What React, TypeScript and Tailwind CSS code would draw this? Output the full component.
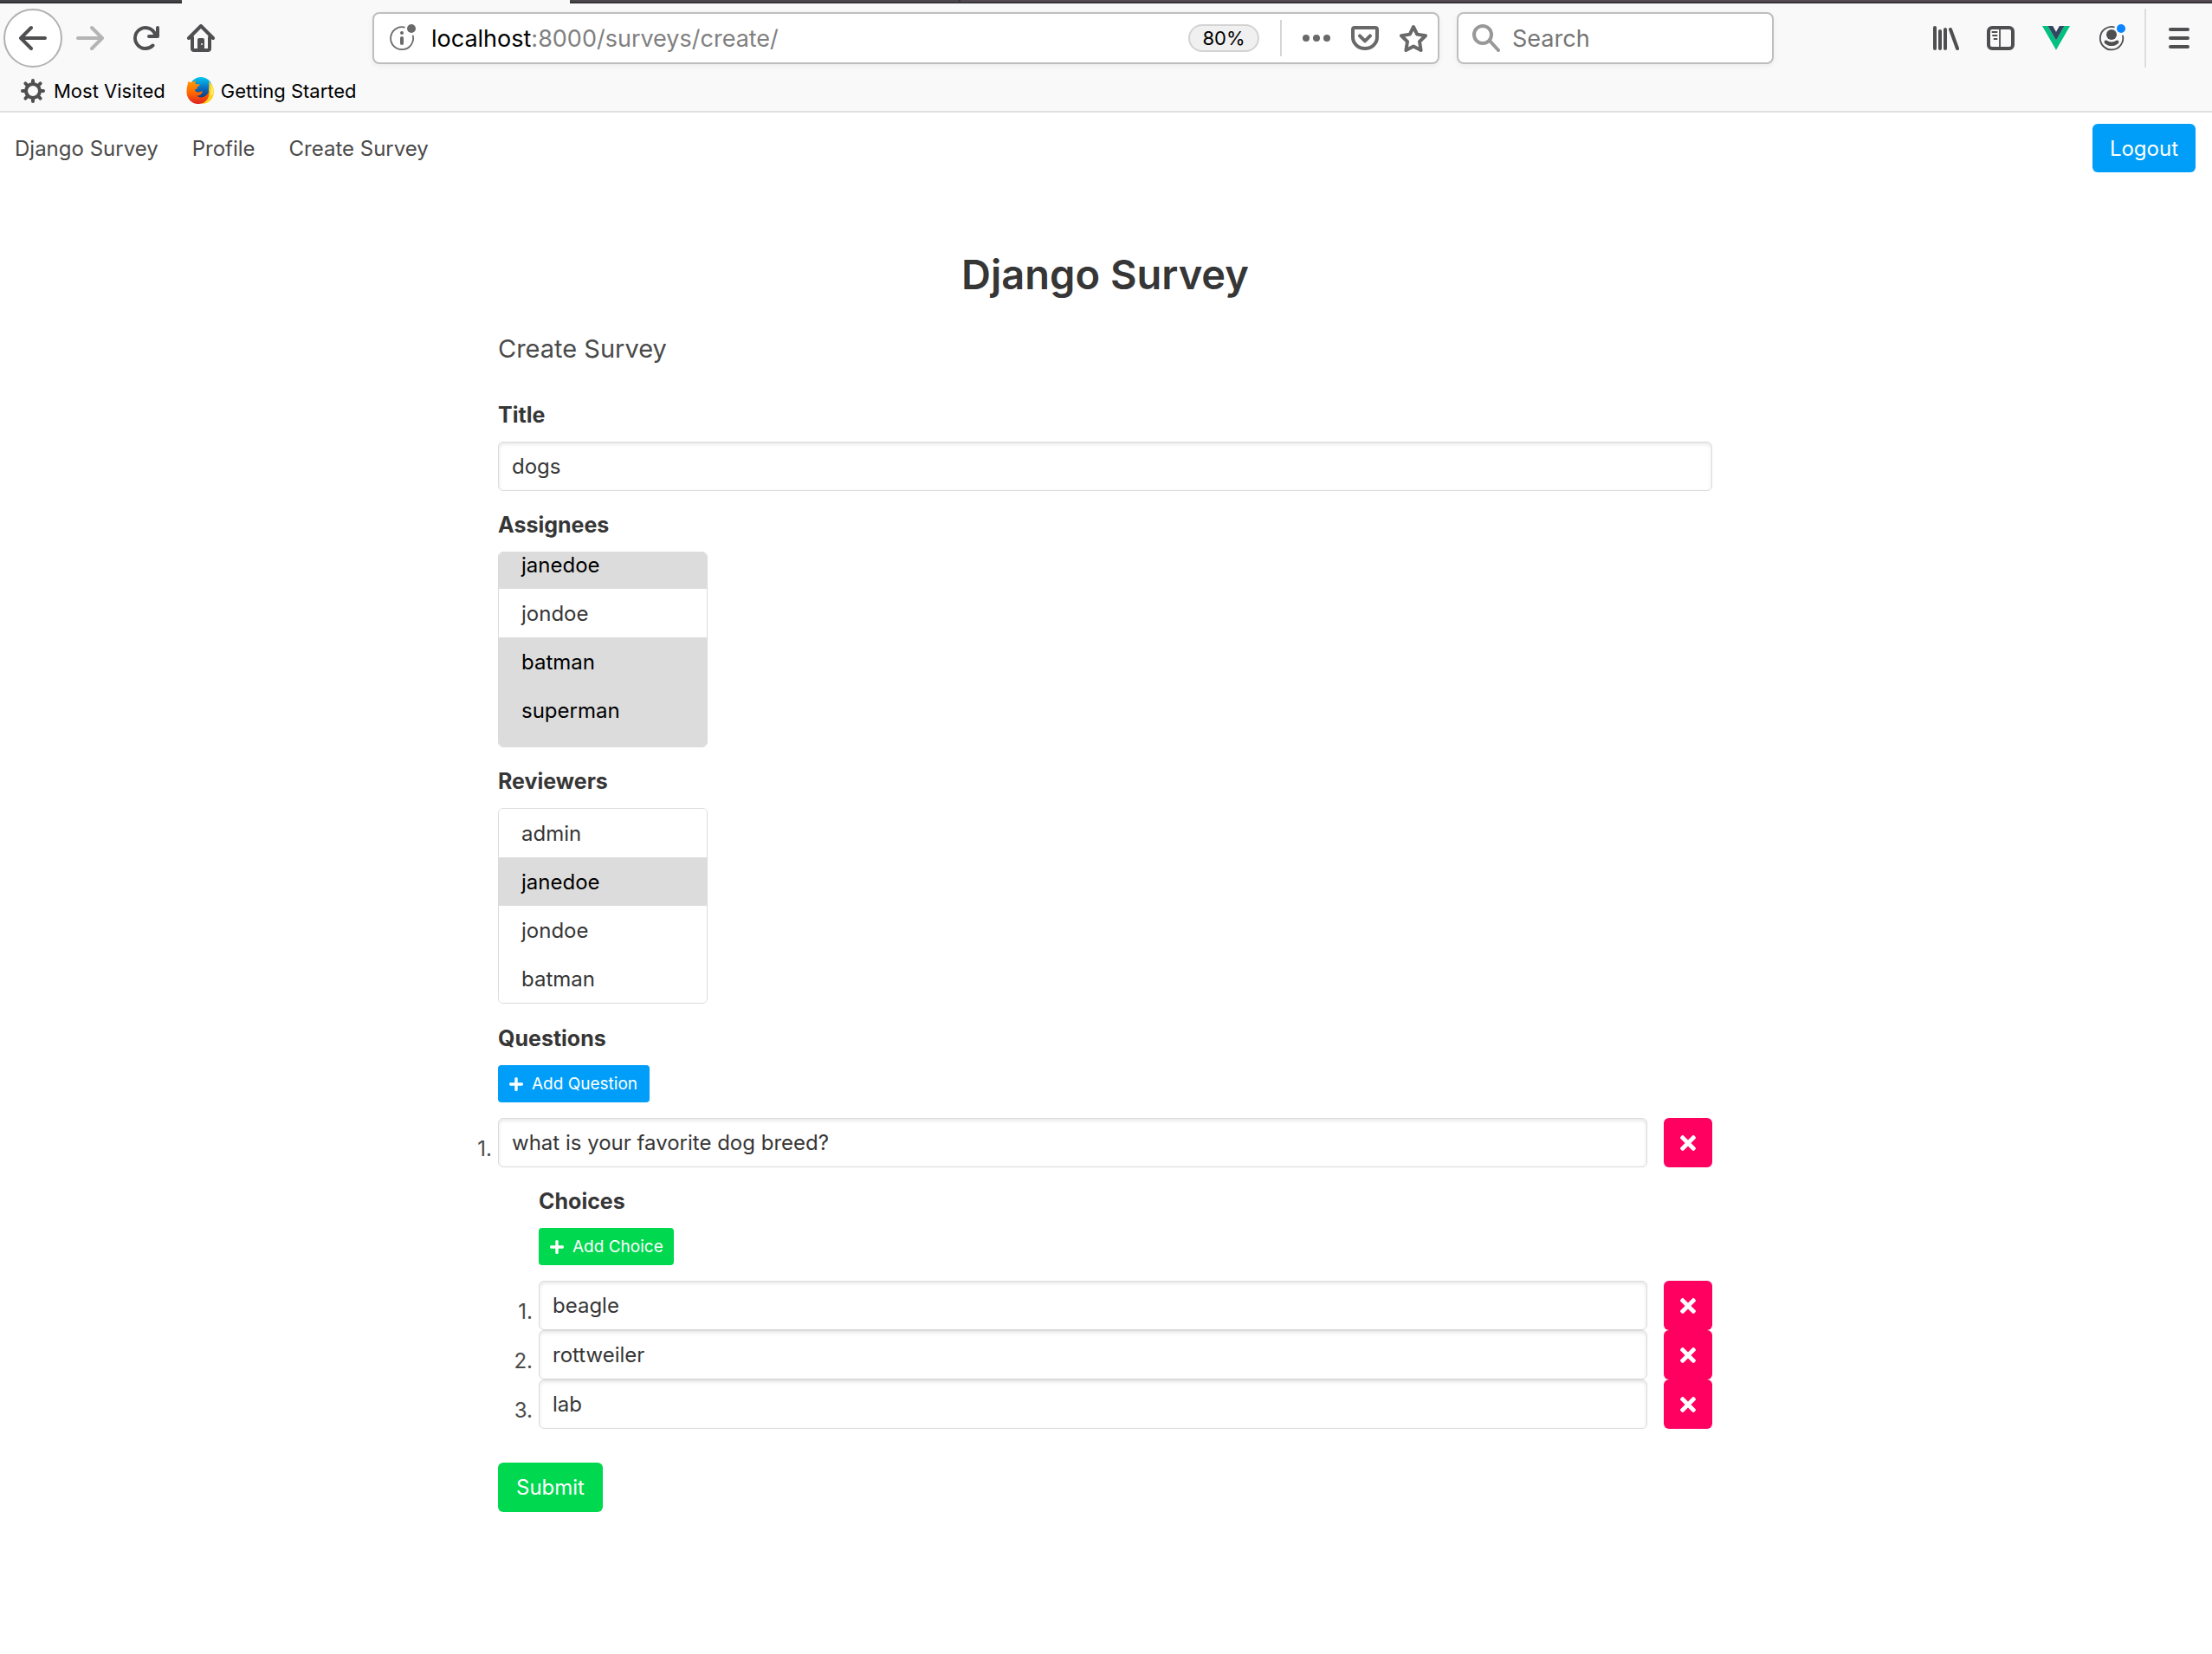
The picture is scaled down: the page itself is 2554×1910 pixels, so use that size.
import { useEffect, useRef } from "react";
import type { ReactNode } from "react";
import { FaPlus, FaTimes } from "react-icons/fa";

const navLinks = ["Django Survey", "Profile", "Create Survey"];

const choices = ["beagle", "rottweiler", "lab"];

const inputClass =
  "h-[57px] w-full min-w-0 rounded-md border border-[#dbdbdb] bg-white px-[15px] text-2xl text-[#363636] shadow-[inset_0_2px_4px_rgba(10,10,10,0.1)] outline-none";

const labelClass = "mb-3 block text-[25px] leading-[38px] font-bold text-[#363636]";

function Glyph({ children, className = "size-8" }: { children: ReactNode; className?: string }) {
  return (
    <svg viewBox="0 0 16 16" className={`shrink-0 ${className}`} fill="currentColor" aria-hidden="true">
      {children}
    </svg>
  );
}

function FirefoxLogo() {
  return (
    <svg viewBox="0 0 32 32" className="size-8 shrink-0" aria-hidden="true">
      <defs>
        <linearGradient id="globe" x1="0" y1="0" x2="0" y2="1">
          <stop offset="0" stopColor="#00c8f0" />
          <stop offset="0.5" stopColor="#0a6cc0" />
          <stop offset="1" stopColor="#1b2f66" />
        </linearGradient>
        <linearGradient id="fox" x1="0" y1="0" x2="0" y2="1">
          <stop offset="0" stopColor="#ff9a00" />
          <stop offset="0.55" stopColor="#ff6500" />
          <stop offset="1" stopColor="#dd1f22" />
        </linearGradient>
      </defs>
      <circle cx="17" cy="13" r="13" fill="url(#globe)" />
      <path d="M26 5c4 3 6 7 6 12 0 8-6 14-14 14l-2-7c6 1 10-3 10-8 0-4 1-7 0-11z" fill="#ffd21f" />
      <path d="M28.500 9c1 3 1 8-1.500 12l4-1c1-4 .5-8-2.500-11z" fill="#ffed6b" />
      <path
        d="M2.500 4.500C3.500 6 5 6.200 6.500 6c1.500-1 3-1.600 4.500-1.500-.8 1.200-.8 2.300 0 3.700h4.500c.3 1.500-1 2.300-2.800 3.300-.5 1 .2 2-.7 2.500h-2c0 2 1.500 3.500 3.500 3.500 2.200 0 3-1.500 5-1 .8.600.3 1.500-.5 2-1.500 2.500-3.500 3.300-6 3 3 2.500 7 2.500 10 .5 2.600-1.700 4-4 4.500-6.500 1 5.500-2 15-12 15.500C6.500 31.500.5 25 .5 17c0-5 1.200-8.500 2-12.500z"
        fill="url(#fox)"
      />
    </svg>
  );
}

function BrowserChrome() {
  return (
    <header className="border-b-2 border-[#e0e0e1] bg-[#f9f9fa] text-[#4f4f51]">
      <div className="flex h-1">
        <div className="w-[210px] border-b-2 border-[#323234] bg-[#454346]" />
        <div className="w-[448px]" />
        <div className="w-[451px] border-r-2 border-b-2 border-[#38353a] bg-[#4c474a]" />
        <div className="flex-1 border-b-2 border-[#38353a] bg-[#534b4f]" />
      </div>

      <div className="flex h-20 items-center">
        <button
          type="button"
          aria-label="Back"
          className="ml-1 flex size-[68px] items-center justify-center rounded-full border-2 border-[#b1b1b1] bg-white"
        >
          <Glyph>
            <path d="M15 7H3.414l4.293-4.293a1 1 0 0 0-1.414-1.414l-6 6a1 1 0 0 0 0 1.414l6 6a1 1 0 0 0 1.414-1.414L3.414 9H15a1 1 0 0 0 0-2z" />
          </Glyph>
        </button>
        <button type="button" aria-label="Forward" className="ml-4 text-[#b4b4b5]">
          <Glyph>
            <path d="M1 7h11.586L8.293 2.707a1 1 0 0 1 1.414-1.414l6 6a1 1 0 0 1 0 1.414l-6 6a1 1 0 0 1-1.414-1.414L12.586 9H1a1 1 0 0 1 0-2z" />
          </Glyph>
        </button>
        <button type="button" aria-label="Reload" className="ml-8">
          <Glyph>
            <path d="M15 1a1 1 0 0 0-1 1v2.418A6.995 6.995 0 1 0 8 15a6.954 6.954 0 0 0 4.950-2.050 1 1 0 0 0-1.414-1.414A5.019 5.019 0 1 1 12.549 6H10a1 1 0 0 0 0 2h5a1 1 0 0 0 1-1V2a1 1 0 0 0-1-1z" />
          </Glyph>
        </button>
        <button type="button" aria-label="Home" className="ml-8">
          <Glyph>
            <path
              d="M1 8l7-7 7 7M3 7.500V14a1 1 0 0 0 1 1h8a1 1 0 0 0 1-1V7.500"
              fill="none"
              stroke="currentColor"
              strokeWidth="2"
              strokeLinecap="round"
              strokeLinejoin="round"
            />
            <path d="M7 8h2a1 1 0 0 1 1 1v6H6V9a1 1 0 0 1 1-1z" />
            <circle cx="8.500" cy="11.500" r="0.500" fill="#f9f9fa" />
          </Glyph>
        </button>

        <div className="ml-[182px] flex h-[60px] flex-1 items-center rounded-lg border-2 border-[#bebebe] bg-white pr-3 shadow-[0_2px_6px_rgba(0,0,0,0.06)]">
          <span className="ml-4 text-[#6a6a6b]">
            <Glyph>
              <path
                d="M9.800 1.850A6.500 6.500 0 1 0 14.300 6.400"
                fill="none"
                stroke="currentColor"
                strokeWidth="0.900"
              />
              <circle cx="8" cy="5" r="1" />
              <rect x="7" y="7" width="2" height="5" rx="1" />
              <circle cx="13.500" cy="2.500" r="2.500" />
            </Glyph>
          </span>
          <div className="ml-[18px] flex-1 pt-0.5 text-[27px] text-[#808080]">
            <span className="text-black">localhost</span>:8000/surveys/create/
          </div>
          <button
            type="button"
            className="flex h-8 w-[82px] items-center justify-center rounded-full border-2 border-[#d3d3d4] bg-[#f0f0f1] pt-0.5 text-[22px] text-black"
          >
            80%
          </button>
          <div className="ml-6 h-[42px] w-0.5 bg-[#d5d5d6]" />
          <div className="ml-6 flex gap-6 text-[#69696a]">
            <button type="button" aria-label="Page actions">
              <Glyph>
                <circle cx="2" cy="8" r="2" />
                <circle cx="8" cy="8" r="2" />
                <circle cx="14" cy="8" r="2" />
              </Glyph>
            </button>
            <button type="button" aria-label="Save to Pocket">
              <Glyph>
                <path
                  d="M2 2h12a1 1 0 0 1 1 1v4.500a7 6.500 0 0 1-14 0V3a1 1 0 0 1 1-1zM5 6.700l3 3 3-3"
                  fill="none"
                  stroke="currentColor"
                  strokeWidth="2"
                  strokeLinecap="round"
                  strokeLinejoin="round"
                />
              </Glyph>
            </button>
            <button type="button" aria-label="Bookmark this page">
              <Glyph>
                <path
                  d="M8 1.500l2.100 4.300 4.900.8-3.500 3.400.8 5L8 12.700 3.700 15l.8-5L1 6.600l4.900-.8z"
                  fill="none"
                  stroke="currentColor"
                  strokeWidth="2"
                  strokeLinejoin="round"
                />
              </Glyph>
            </button>
          </div>
        </div>

        <div className="ml-5 flex h-[60px] w-[366px] items-center rounded-lg border-2 border-[#bebebe] bg-white px-4 shadow-[0_2px_6px_rgba(0,0,0,0.06)]">
          <Glyph className="size-8 text-[#989898]">
            <path
              d="M10 9.500l5 5.500M11 6a5 5 0 1 1-10 0 5 5 0 0 1 10 0z"
              fill="none"
              stroke="currentColor"
              strokeWidth="2"
              strokeLinecap="round"
            />
          </Glyph>
          <input
            type="text"
            aria-label="Search"
            placeholder="Search"
            className="ml-[14px] w-full min-w-0 pt-0.5 text-[27px] text-black outline-none placeholder:text-[#757575]"
          />
        </div>

        <div className="ml-[182px] flex gap-8">
          <button type="button" aria-label="Library">
            <Glyph>
              <rect x="1" y="1" width="2" height="14" rx="1" />
              <rect x="4" y="3" width="2" height="12" rx="1" />
              <rect x="7" y="2" width="2" height="13" rx="1" />
              <path d="M11 3l4 11" stroke="currentColor" strokeWidth="2" strokeLinecap="round" />
            </Glyph>
          </button>
          <button type="button" aria-label="Sidebars">
            <Glyph>
              <rect x="1" y="2" width="14" height="12" rx="2" fill="none" stroke="currentColor" strokeWidth="2" />
              <path
                d="M7.500 2v12M3.200 4.500h2.600M3.500 6.500h2.300M4.200 8.500h1.600"
                stroke="currentColor"
                strokeWidth="0.900"
                strokeLinecap="round"
              />
            </Glyph>
          </button>
          <button type="button" aria-label="Vue devtools">
            <Glyph>
              <path d="M0 1h3.200L8 9.300 12.800 1H16L8 14.900z" fill="#00c180" />
              <path d="M3.200 1h2.900L8 4.400 9.900 1h2.900L8 9.300z" fill="#30475f" />
            </Glyph>
          </button>
          <button type="button" aria-label="Account">
            <Glyph>
              <path d="M9.800 1.750A6.600 6.600 0 1 0 14.400 6.400" fill="none" stroke="currentColor" strokeWidth="0.900" />
              <circle cx="8" cy="6" r="3" />
              <path d="M5 9.300c2 1.300 4 1.300 6 0 1.200 0 1.600 1 .8 1.800-2.200 1.900-5.400 1.900-7.600 0C3.400 10.300 3.800 9.300 5 9.300z" />
              <circle cx="13.500" cy="2.500" r="2.500" fill="#0a84ff" />
            </Glyph>
          </button>
        </div>
        <div className="ml-[22px] h-[68px] w-0.5 bg-[#dededf]" />
        <button type="button" aria-label="Open menu" className="mr-[22px] ml-[22px]">
          <Glyph>
            <rect x="2" y="2" width="12" height="2" rx="1" />
            <rect x="2" y="7" width="12" height="2" rx="1" />
            <rect x="2" y="12" width="12" height="2" rx="1" />
          </Glyph>
        </button>
      </div>

      <div className="flex h-11 items-start pl-[22px] text-[22px] leading-10 text-black">
        <a href="#most-visited" className="flex items-center gap-2">
          <Glyph className="size-8 text-[#4f4f51]">
            <circle cx="8" cy="8" r="4" fill="none" stroke="currentColor" strokeWidth="2" />
            <path
              d="M8 2v1.500M8 12.500V14M2 8h1.500M12.500 8H14M3.700 3.700l1.200 1.200M11.100 11.100l1.200 1.200M12.300 3.700l-1.200 1.200M4.900 11.100l-1.200 1.200"
              stroke="currentColor"
              strokeWidth="2"
              strokeLinecap="round"
            />
          </Glyph>
          <span className="pt-px">Most Visited</span>
        </a>
        <a href="#getting-started" className="ml-6 flex items-center gap-2">
          <FirefoxLogo />
          <span className="pt-px">Getting Started</span>
        </a>
      </div>
    </header>
  );
}

function UserSelect({
  id,
  users,
  selected,
  offset = 0,
}: {
  id: string;
  users: string[];
  selected: string[];
  offset?: number;
}) {
  const ref = useRef<HTMLSelectElement>(null);

  useEffect(() => {
    if (ref.current) ref.current.scrollTop = offset;
  }, [offset]);

  return (
    <select
      ref={ref}
      id={id}
      multiple
      size={4}
      defaultValue={selected}
      className="block h-[226px] w-[242px] appearance-none overflow-y-auto rounded-md border border-[#dbdbdb] bg-white text-2xl text-[#363636] outline-none [scrollbar-width:none]"
    >
      {users.map((user) => (
        <option
          key={user}
          value={user}
          className="flex h-14 items-center px-[26px] checked:bg-[#dcdcdc] checked:bg-linear-to-r checked:from-[#dcdcdc] checked:to-[#dcdcdc] checked:text-black last:h-[71px] last:pb-[15px]"
        >
          {user}
        </option>
      ))}
    </select>
  );
}

function AnswerRow({ index, value, label }: { index: number; value: string; label: string }) {
  return (
    <div className="flex">
      <span className="-ml-9 w-9 shrink-0 pt-[17px] pr-[7px] text-right leading-[38px]">{index}.</span>
      <input type="text" aria-label={label} defaultValue={value} className={inputClass} />
      <button
        type="button"
        aria-label={`Remove ${label}`}
        className="ml-[19px] flex h-[57px] w-14 shrink-0 items-center justify-center rounded-md bg-[#ff0060] text-white"
      >
        <FaTimes size={26} />
      </button>
    </div>
  );
}

export default function App() {
  const users = ["admin", "janedoe", "jondoe", "batman", "superman"];

  return (
    <div className="min-h-screen bg-white font-['Inter',sans-serif] text-2xl text-[#4a4a4a]">
      <BrowserChrome />

      <nav className="flex h-[82px] items-center justify-between pr-[19px] pl-[17px]">
        <div className="flex gap-[39px] pt-0.5">
          {navLinks.map((link) => (
            <a key={link} href="#">
              {link}
            </a>
          ))}
        </div>
        <button type="button" className="h-14 rounded-md bg-[#009ef8] px-5 pt-0.5 text-white">
          Logout
        </button>
      </nav>

      <main className="mx-auto max-w-[1404px] pt-[76px] pr-0.5 pb-20">
        <h1 className="text-center text-[47px] leading-[58px] font-semibold text-[#363636]">Django Survey</h1>
        <h2 className="my-[37px] text-[29px] leading-10">Create Survey</h2>

        <form onSubmit={(e) => e.preventDefault()}>
          <label htmlFor="title" className={labelClass}>
            Title
          </label>
          <input id="title" type="text" defaultValue="dogs" className={inputClass} />

          <div className="mt-5">
            <label htmlFor="assignees" className={labelClass}>
              Assignees
            </label>
            <UserSelect id="assignees" users={users} selected={["janedoe", "batman", "superman"]} offset={70} />
          </div>

          <div className="mt-5">
            <label htmlFor="reviewers" className={labelClass}>
              Reviewers
            </label>
            <UserSelect id="reviewers" users={users} selected={["janedoe"]} />
          </div>

          <h3 className={`mt-[21px] ${labelClass}`}>Questions</h3>
          <button
            type="button"
            className="mb-[18px] flex h-[43px] items-center gap-[9px] rounded bg-[#009ef8] pr-[14px] pl-3 text-[19px] text-white"
          >
            <FaPlus size={18} />
            Add Question
          </button>
          <AnswerRow index={1} value="what is your favorite dog breed?" label="Question 1" />

          <div className="mt-5 ml-[47px]">
            <h4 className={labelClass}>Choices</h4>
            <button
              type="button"
              className="mb-[18px] flex h-[43px] items-center gap-[9px] rounded bg-[#00d84f] px-3 text-[19px] text-white"
            >
              <FaPlus size={18} />
              Add Choice
            </button>
            {choices.map((choice, i) => (
              <AnswerRow key={choice} index={i + 1} value={choice} label={`Choice ${i + 1}`} />
            ))}
          </div>

          <button type="submit" className="mt-[39px] h-[57px] rounded-md bg-[#00d84f] px-[21px] text-white">
            Submit
          </button>
        </form>
      </main>
    </div>
  );
}
